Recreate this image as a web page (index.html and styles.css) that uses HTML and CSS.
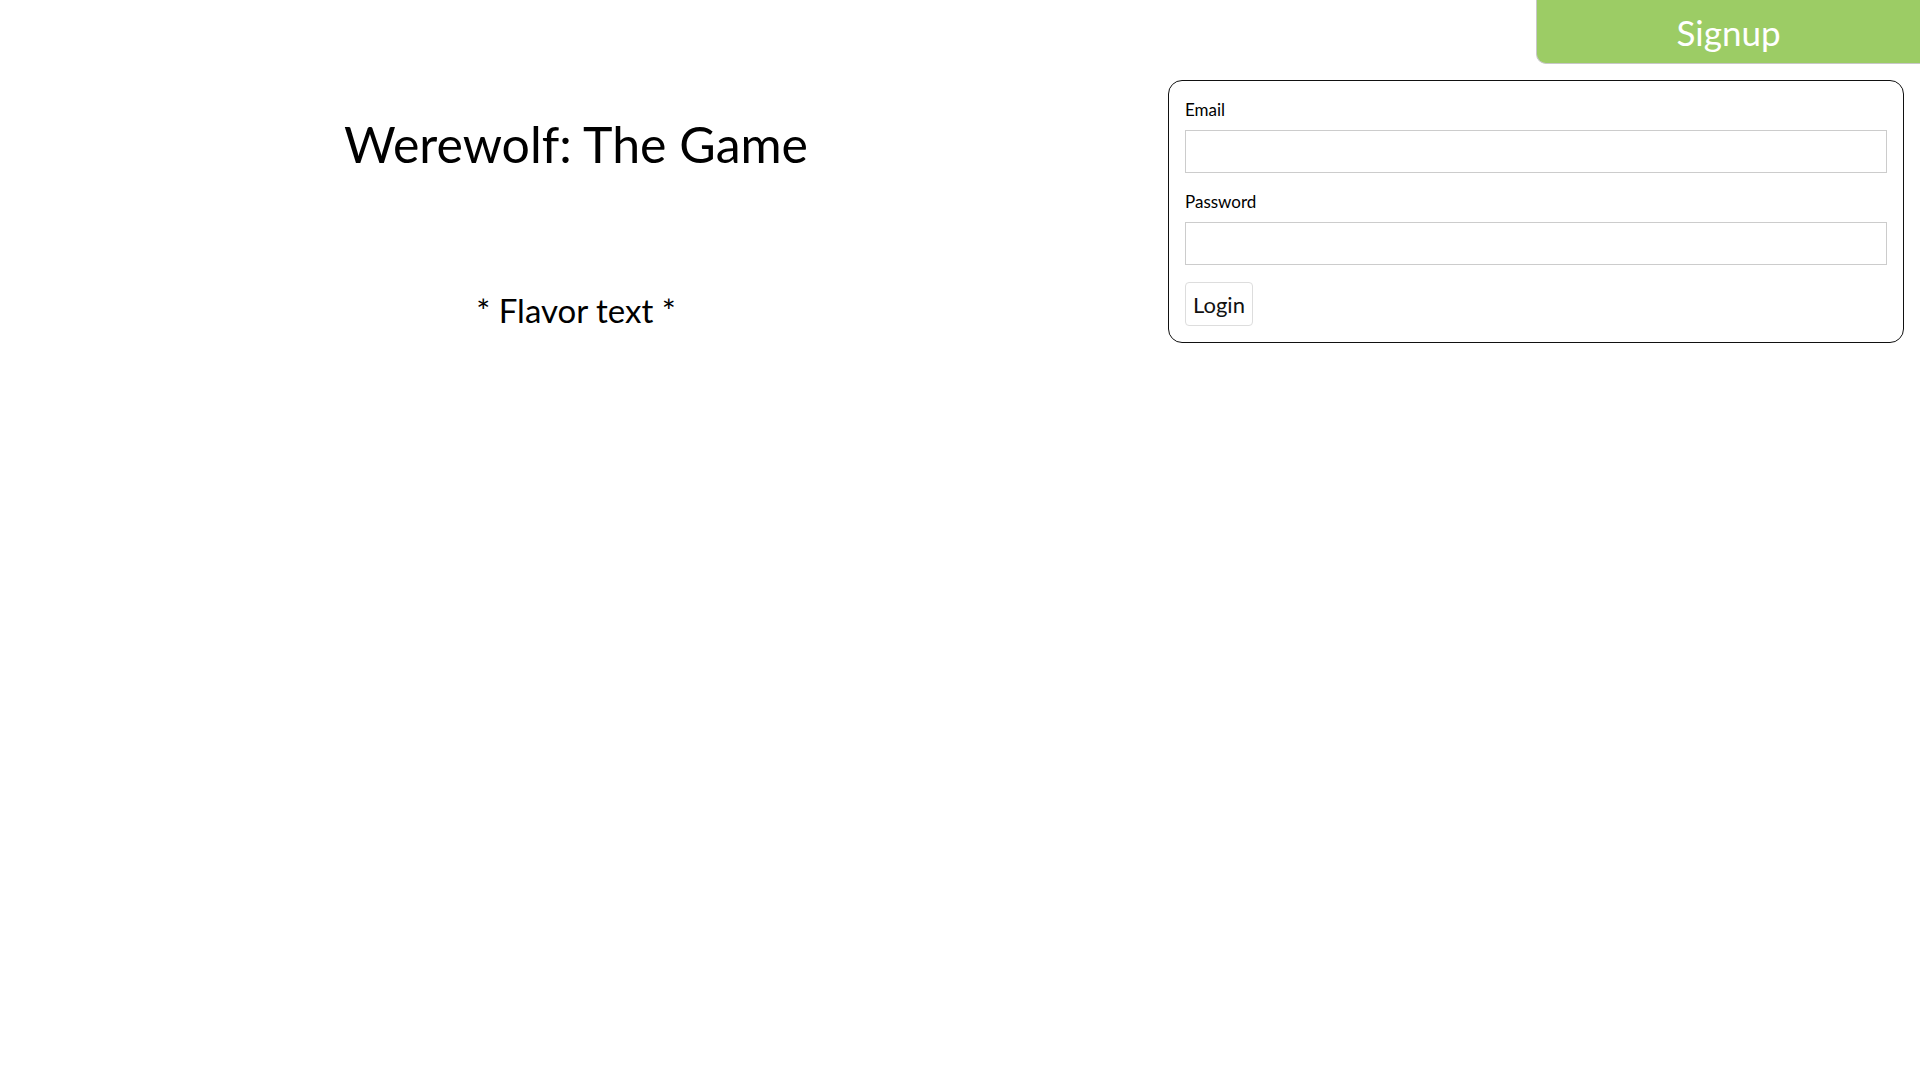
FILE: index.html
```html
<!DOCTYPE html>
<html lang="en">
<head>
<meta charset="utf-8">
<title>Werewolf: The Game</title>
<link rel="stylesheet" href="styles.css">
</head>
<body>
<header class="topbar">
  <button class="signup" type="button">Signup</button>
</header>
<main class="layout">
  <section class="intro">
    <h1 class="title">Werewolf: The Game</h1>
    <p class="flavor">* Flavor text *</p>
  </section>
  <section class="side">
    <form class="login-card">
      <label class="field-label" for="email">Email</label>
      <input class="field-input" id="email" type="email" autofocus>
      <label class="field-label field-label-gap" for="password">Password</label>
      <input class="field-input" id="password" type="password">
      <button class="login-btn" type="button">Login</button>
    </form>
  </section>
</main>
</body>
</html>
```
FILE: styles.css
```css
html, body {
  margin: 0;
  padding: 0;
  background: #ffffff;
}
body {
  font-family: "Lato", "Noto Sans", sans-serif;
  color: #000;
}
.topbar {
  display: flex;
  justify-content: flex-end;
  height: 64px;
}
.signup {
  width: 384px;
  height: 64px;
  background: #9ccc65;
  color: #ffffff;
  border: 1px solid #c8c8c8;
  border-top: none;
  border-right: none;
  border-radius: 0 0 0 10px;
  font-family: "Lato", "Noto Sans", sans-serif;
  font-size: 35px;
  line-height: 64px;
  padding: 0;
  margin: 0;
}
.layout {
  display: grid;
  grid-template-columns: 60% 40%;
}
.intro {
  display: flex;
  flex-direction: column;
  align-items: center;
}
.title {
  margin: 50px 0 0;
  font-size: 50px;
  font-weight: 400;
  line-height: 1.2;
}
.flavor {
  margin: 117px 0 0;
  font-size: 33px;
  line-height: 1.2;
}
.side {
  padding: 16px 16px 0;
}
.login-card {
  display: flex;
  flex-direction: column;
  align-items: flex-start;
  border: 1px solid #111;
  border-radius: 14px;
  padding: 17px 16px 16px 16px;
}
.field-label {
  font-size: 17px;
  line-height: 24px;
}
.field-label-gap {
  margin-top: 17px;
}
.field-input {
  box-sizing: border-box;
  width: 100%;
  height: 43px;
  margin-top: 8px;
  border: 1px solid #cccccc;
  border-radius: 0;
  padding: 0 8px;
  font-family: "Lato", "Noto Sans", sans-serif;
  font-size: 18px;
  outline: none;
  background: #fff;
}
.login-btn {
  box-sizing: border-box;
  margin-top: 17px;
  height: 44px;
  padding: 0 7px;
  background: #ffffff;
  border: 1px solid #dddddd;
  border-radius: 4px;
  font-family: "Lato", "Noto Sans", sans-serif;
  font-size: 22px;
  color: #111;
}
```
